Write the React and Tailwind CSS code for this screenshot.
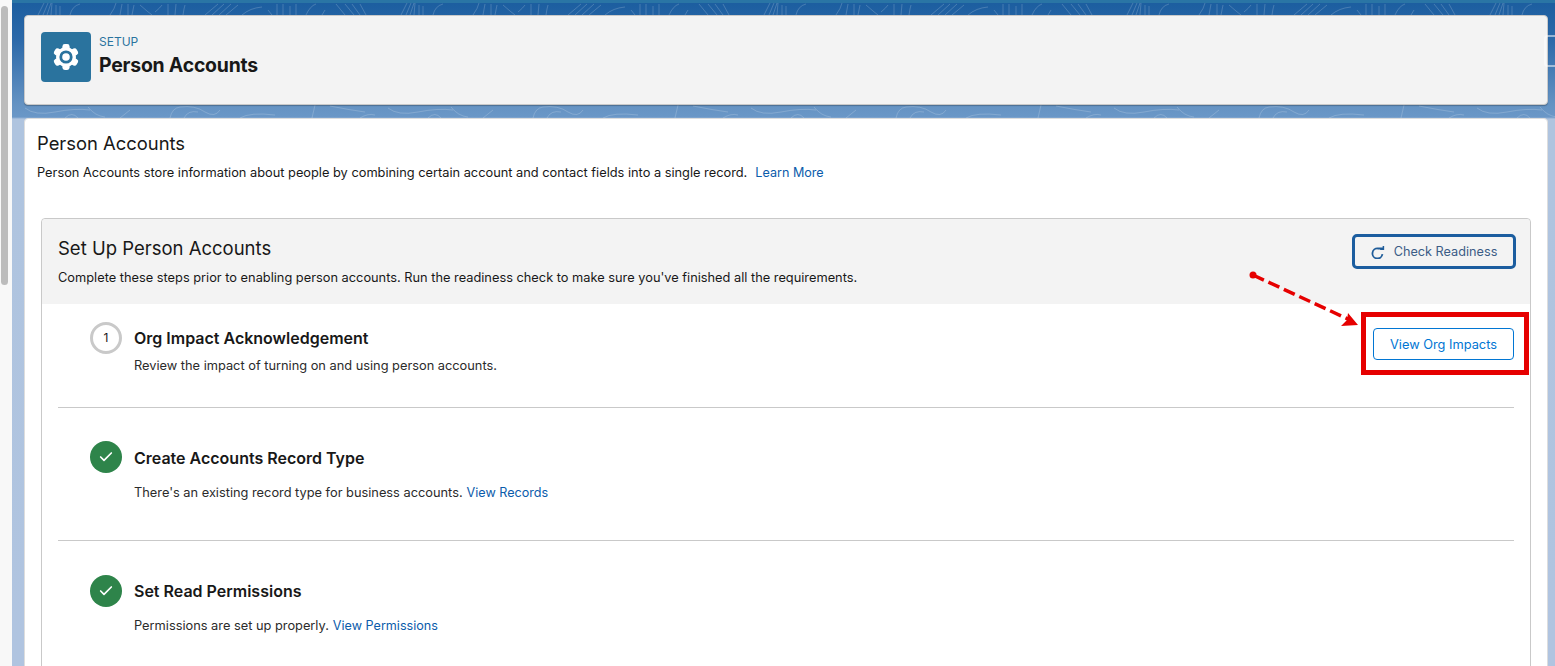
import React from "react";
import { Check } from "lucide-react";

const font = "font-['Inter','Liberation_Sans',sans-serif]";

const GearIcon = () => (
  <svg viewBox="0 0 30 30" className="h-[30px] w-[30px]">
    <circle cx="15" cy="15" r="10" fill="#fff" />
    <rect x="11.4" y="2" width="7.2" height="26" rx="2.4" fill="#fff" />
    <rect x="11.4" y="2" width="7.2" height="26" rx="2.4" fill="#fff" transform="rotate(60 15 15)" />
    <rect x="11.4" y="2" width="7.2" height="26" rx="2.4" fill="#fff" transform="rotate(120 15 15)" />
    <circle cx="15" cy="15" r="6.6" fill="#2a739e" />
    <circle cx="15" cy="15" r="3.8" fill="#fff" />
  </svg>
);

const RefreshIcon = () => (
  <svg viewBox="0 0 14 14" className="h-[14px] w-[14px]" fill="none" stroke="#1f5c99" strokeWidth="1.8">
    <path d="M11.4 9.2A5 5 0 1 1 7 3.5h5" />
    <path d="M12.4 1v3.2H9.2" strokeWidth="1.5" />
  </svg>
);

// topographic lines showing between the cards
const Contours = () => (
  <svg className="absolute left-0 top-0 h-[118px] w-[1543px]" fill="none">
    <defs>
      <pattern id="topo" width="363" height="118" patternUnits="userSpaceOnUse">
        <g stroke="#ffffff" strokeOpacity="0.18" strokeWidth="1">
          <path d="M26 15L32 3M31 15L36 3M35 15L39 3M39 15L40 3M44 15V5M48 15V6M58 15Q60 6 68 4" />
          <path d="M98 15Q103 8 104 3M108 15L110 4M116 15V4M120 15L122 5M128 5Q136 12 140 15M143 12Q148 8 150 5M156 15V4M163 15L164 4M171 15Q172 8 173 5" />
          <path d="M193 15L206 4M200 15L212 4M207 15L219 4M214 15L226 5M230 15Q238 8 250 7M256 10L260 15M265 4V15M271 4V15M278 6V15M284 4V15M294 15Q298 6 304 4M310 15L313 10M324 4L333 15M333 4L342 15M340 4L348 15M348 4L354 15" />
          <path d="M13 108Q23 116 43 112T78 110M53 118Q60 111 66 118M76 107Q83 116 93 117M108 118L118 110" />
          <path d="M158 118Q160 108 168 107Q183 105 193 112Q203 118 208 110M172 118Q176 110 186 112M228 118Q238 112 263 115M303 105L300 118M318 106Q338 110 353 112M348 118Q356 113 363 115" />
        </g>
      </pattern>
    </defs>
    <rect width="1543" height="118" fill="url(#topo)" />
  </svg>
);

const Step = ({ done, number, children, action, className }) => (
  <div className={`flex border-b border-[#c9c9c9] pl-8 ${className}`}>
    {done ? (
      <div className="flex h-8 w-8 shrink-0 items-center justify-center rounded-full bg-[#2e844a]">
        <Check size={16} color="#fff" strokeWidth={2.5} />
      </div>
    ) : (
      <div className="flex h-8 w-8 shrink-0 items-center justify-center rounded-full border-[3px] border-[#c9c9c9] text-[12px] text-[#181818]">
        {number}
      </div>
    )}
    <div className="ml-3 flex-1">{children}</div>
    {action}
  </div>
);

export default function App() {
  return (
    <div className={`${font} flex h-[666px] w-[1555px] overflow-hidden bg-white text-[#181818]`}>
      <div className="h-full w-3 shrink-0 bg-[#f8f8f8] pl-px pt-[6px]">
        <div className="h-[279px] w-[7px] rounded-full bg-[#bcbcbc]" />
      </div>

      <div className="relative h-full flex-1 overflow-hidden bg-[linear-gradient(180deg,#1b5d9f_0px,#2c69a9_40px,#6593c3_105px,#6a97c7_117px,#afc4df_119px,#b0c4e0_100%)] pl-3 pr-[7px] pt-[15px]">
        <div className="absolute left-0 top-0 h-[3px] w-full bg-[#2a75a5]" />
        <Contours />

        <div className="relative flex h-[90px] items-start rounded border border-[#c9c9c9] bg-[#f3f3f3] pl-4 pt-4 shadow-[0_1px_1px_rgba(0,0,0,0.25)]">
          <div className="flex h-[50px] w-[50px] items-center justify-center rounded bg-[#2a739e]">
            <GearIcon />
          </div>
          <div className="ml-2 mt-px">
            <div className="text-[12px] leading-[18px] text-[#2a739e]">SETUP</div>
            <div className="text-[19.4px] font-bold leading-[28px] tracking-[-0.2px]">Person Accounts</div>
          </div>
        </div>

        {/* collapsed panel handle */}
        <div className="absolute right-0 top-[35px] h-[32px] w-[11px] rounded-l border-2 border-r-0 border-white/50" />

        <div className="relative mt-[13px] h-[560px] rounded border border-[#dddddd] bg-white pl-3 pr-4 pt-[10px]">
          <h1 className="text-[18.4px] leading-[28px]">Person Accounts</h1>
          <p className="mt-[6px] text-[12.8px] leading-[19px]">
            Person Accounts store information about people by combining certain account and contact fields into a single record.
            <a className="ml-2 text-[12.6px] text-[#0b5cab]">Learn More</a>
          </p>

          <div className="ml-1 mt-[36px] h-[460px] rounded-t border border-[#c9c9c9]">
            <div className="flex h-[85px] justify-between rounded-t bg-[#f3f3f3] pl-4 pr-[14px] pt-[15px]">
              <div>
                <h2 className="text-[18.5px] leading-[28px]">Set Up Person Accounts</h2>
                <p className="mt-[6px] text-[12.8px] leading-[19px]">
                  Complete these steps prior to enabling person accounts. Run the readiness check to make sure you've finished all the requirements.
                </p>
              </div>
              <button className="flex h-[35px] w-[164px] items-center justify-center gap-[9px] rounded-[5px] border-[3px] border-[#1b5d9f] text-[12.7px] text-[#3b5c86]">
                <RefreshIcon />
                Check Readiness
              </button>
            </div>

            <div className="px-4">
              <Step
                number="1"
                className="h-[104px] pt-[18px]"
                action={
                  <div className="mr-[-15px] mt-[-10px] self-start border-[5px] border-[#e60000] pb-[10px] pl-[7px] pr-[10px] pt-[11px]">
                    <button className="flex h-8 w-[141px] items-center justify-center rounded border border-[#0176d3] bg-white pt-px text-[12.8px] text-[#0176d3]">
                      View Org Impacts
                    </button>
                  </div>
                }
              >
                <h3 className="mt-[4px] text-[16px] font-semibold leading-[24px]">Org Impact Acknowledgement</h3>
                <p className="mt-[6px] text-[12.8px] leading-[19px] text-[#2b2b2b]">Review the impact of turning on and using person accounts.</p>
              </Step>

              <Step done className="h-[133px] pt-[33px]">
                <h3 className="mt-[5px] text-[16px] font-semibold leading-[24px]">Create Accounts Record Type</h3>
                <p className="mt-[13px] text-[12.8px] leading-[19px] text-[#2b2b2b]">
                  There's an existing record type for business accounts.
                  <a className="ml-1 text-[12.6px] text-[#0b5cab]">View Records</a>
                </p>
              </Step>

              <Step done className="h-[133px] border-b-0 pt-[34px]">
                <h3 className="mt-[4px] text-[16px] font-semibold leading-[24px]">Set Read Permissions</h3>
                <p className="mt-[13px] text-[12.8px] leading-[19px] text-[#2b2b2b]">
                  Permissions are set up properly.
                  <a className="ml-1 text-[12.6px] text-[#0b5cab]">View Permissions</a>
                </p>
              </Step>
            </div>
          </div>
        </div>

        {/* annotation arrow */}
        <svg className="absolute left-[1228px] top-[260px] h-[80px] w-[130px]" viewBox="0 0 130 80" fill="none">
          <circle cx="13" cy="15" r="3.5" fill="#e60000" />
          <path d="M13 15L110 60" stroke="#e60000" strokeWidth="3.5" strokeDasharray="12 5" />
          <path d="M118 65L101 66L107 60L108 53Z" fill="#e60000" />
        </svg>
      </div>
    </div>
  );
}
